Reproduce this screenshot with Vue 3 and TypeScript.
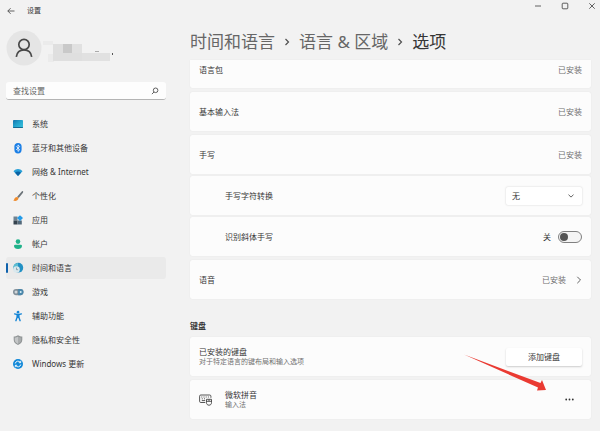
<script setup lang="ts">
import { ref } from 'vue'

interface NavItem {
  id: string
  label: string
}

const navItems: NavItem[] = [
  { id: 'system', label: '系统' },
  { id: 'bluetooth', label: '蓝牙和其他设备' },
  { id: 'network', label: '网络 & Internet' },
  { id: 'personal', label: '个性化' },
  { id: 'apps', label: '应用' },
  { id: 'accounts', label: '帐户' },
  { id: 'time', label: '时间和语言' },
  { id: 'gaming', label: '游戏' },
  { id: 'access', label: '辅助功能' },
  { id: 'privacy', label: '隐私和安全性' },
  { id: 'update', label: 'Windows 更新' },
]

const active = ref('time')
const query = ref('')
const conversion = ref('无')
const slanted = ref(false)
</script>

<template>
  <div class="window">
    <header class="titlebar">
      <button class="plain" type="button" aria-label="返回">
        <svg width="8" height="8" viewBox="0 0 8 8" class="line"><path d="M7.5 4H.8M3.6 1.2.8 4l2.8 2.8" /></svg>
      </button>
      <span class="app-name">设置</span>
      <div class="caption">
        <button class="plain" type="button" aria-label="最小化">
          <svg width="8" height="8" viewBox="0 0 8 8" class="line"><path d="M1 4h6" /></svg>
        </button>
        <button class="plain" type="button" aria-label="最大化">
          <svg width="8" height="8" viewBox="0 0 8 8" class="line"><rect x="1.2" y="1.2" width="5.6" height="5.6" rx=".8" /></svg>
        </button>
        <button class="plain" type="button" aria-label="关闭">
          <svg width="8" height="8" viewBox="0 0 8 8" class="line"><path d="m1.3 1.3 5.4 5.4m0-5.4L1.3 6.7" /></svg>
        </button>
      </div>
    </header>

    <div class="body">
      <aside class="sidebar">
        <div class="profile">
          <svg width="36" height="36" viewBox="0 0 36 36">
            <circle cx="18" cy="18" r="17.5" fill="#e5e5e5" />
            <g fill="none" stroke="#484848" stroke-width="1.7">
              <circle cx="18" cy="14.5" r="5.2" />
              <path d="M10.3 26.8c.6-4.3 3.6-7 7.7-7s7.1 2.7 7.7 7" />
            </g>
          </svg>
          <svg class="name-mask" width="74" height="26" viewBox="0 0 74 26">
            <g class="mosaic">
              <path fill="#ebebeb" d="M0 3h10v4H0zM5 16h6v8H5z" />
              <path fill="#dfdfdf" d="M10 6h10v9H10zM10 15h29v8H10z" />
              <path fill="#c9c9c9" d="M20 6h9v9h-9z" />
              <path fill="#e1e1e1" d="M29 6h10v9H29zM39 15h28v8H39z" />
            </g>
            <path fill="#aaa" d="M52 13h4v1h-4z" />
            <path fill="#555" d="M69 15h1v2h-1z" />
          </svg>
        </div>

        <label class="search">
          <input v-model="query" type="text" placeholder="查找设置" aria-label="查找设置" />
          <svg width="8" height="8" viewBox="0 0 8 8" class="line"><circle cx="4.6" cy="3.3" r="2.3" /><path d="M3 5 .9 7.1" /></svg>
        </label>

        <nav class="nav">
          <a
            v-for="item in navItems"
            :key="item.id"
            href="#"
            :class="['nav-item', { active: active === item.id }]"
            @click.prevent="active = item.id"
          >
            <svg width="12" height="12" viewBox="0 0 12 12">
              <g v-if="item.id === 'system'">
                <defs>
                  <linearGradient id="screen" x1="0" y1="0" x2="1" y2="1">
                    <stop offset="0" stop-color="#1573ac" />
                    <stop offset=".45" stop-color="#22a2cc" />
                    <stop offset="1" stop-color="#3cc4dc" />
                  </linearGradient>
                </defs>
                <rect x="1" y="2" width="10" height="8" rx=".8" fill="url(#screen)" />
                <path d="M1 9h10v.2a.8.8 0 0 1-.8.8H1.8a.8.8 0 0 1-.8-.8z" fill="#136a92" />
              </g>
              <g v-else-if="item.id === 'bluetooth'">
                <rect x="2.4" y="1" width="7.2" height="10.4" rx="3.6" fill="#1b7fe6" />
                <path d="m4.2 4.3 3.5 3.5L6 9.4V2.9l1.7 1.6L4.2 8" fill="none" stroke="#fff" stroke-width=".8" />
              </g>
              <g v-else-if="item.id === 'network'">
                <path d="M1.5 5.2C4 2.2 8 2.2 10.5 5.2L6 10z" fill="#27a0d8" />
                <path d="M3 6.8c1.6-1.6 4.400-1.600 6 0L6 10z" fill="#0c62a2" />
              </g>
              <g v-else-if="item.id === 'personal'">
                <path d="M10.8 1c.7.4.4 1.3 0 1.9L6.7 8 5.2 6.8 9.5 1.7c.4-.5.900-.9 1.300-.7z" fill="#6d7479" />
                <path d="M5 6.9c1 0 1.7.9 1.4 1.9C6 10.6 3.5 11.5 1.2 10.500c1.400-.6 1-3.500 3.800-3.600z" fill="#ef8b2c" />
              </g>
              <g v-else-if="item.id === 'apps'">
                <path d="M1.5 2.5h4v4h-4z" fill="#6f8291" />
                <path d="M1.5 6.5h4v4h-4z" fill="#35434e" />
                <path d="M5.5 6.5h4.3v4H5.5z" fill="#53697a" />
                <path d="m8 1.200 3 2.900-3 3-3-3z" fill="#239be8" />
              </g>
              <g v-else-if="item.id === 'accounts'" fill="#20b28a">
                <circle cx="6" cy="3.6" r="2.3" />
                <path d="M2 8a1.2 1.2 0 0 1 1.2-1.2h5.6A1.2 1.2 0 0 1 10 8c0 2-1.7 3-4 3S2 10 2 8z" />
              </g>
              <g v-else-if="item.id === 'time'">
                <circle cx="6.3" cy="5.7" r="4.9" fill="#2391c4" />
                <path d="M6 .9a4.900 4.900 0 0 0-4.600 6.300L6 6z" fill="#5cbdd0" />
                <circle cx="4.5" cy="7.5" r="3.3" fill="#d9e8ed" />
                <path d="M4.5 5.6v2.100h1.600" fill="none" stroke="#6b8896" stroke-width=".7" />
              </g>
              <g v-else-if="item.id === 'gaming'">
                <rect x="1" y="3" width="10.5" height="6.2" rx="3.1" fill="#82909a" />
                <path d="M6.2 3h2.200a3.100 3.100 0 0 1 0 6.200H6.200z" fill="#4b88ac" />
                <path d="M2.500 6h3M4 4.600v3" stroke="#fff" stroke-width=".8" />
                <circle cx="8.7" cy="6.1" r="1" fill="#d9eff7" />
              </g>
              <g v-else-if="item.id === 'access'" fill="none" stroke="#1686d6" stroke-width="1.4" stroke-linecap="round" stroke-linejoin="round">
                <circle cx="6" cy="2.2" r=".7" />
                <path d="M2.600 3.900 6 4.700l3.400-.8M5.100 5v2.300l-1.200 3.400M6.900 5v2.300l1.200 3.400M6 5v2.300" />
              </g>
              <g v-else-if="item.id === 'privacy'">
                <path d="M6 1.200c1.400 1 2.700 1.200 4.300 1.200v3.400c0 2.500-1.800 4.200-4.300 5.200-2.500-1-4.300-2.700-4.300-5.200V2.400c1.600 0 2.900-.2 4.300-1.200z" fill="#8f9394" />
                <path d="M6 2.400c-1.100.7-2 .9-3.300 1v2.400c0 2 1.300 3.200 3.300 4.100z" fill="#c4c6c7" />
                <path d="M6 2.400c1.100.7 2 .9 3.300 1v2.400c0 2-1.300 3.200-3.300 4.100z" fill="#a9acad" />
              </g>
              <g v-else>
                <circle cx="6" cy="6" r="5" fill="#1188d8" />
                <path d="M3.200 5.500a2.900 2.900 0 0 1 5.300-1M8.800 6.500a2.900 2.900 0 0 1-5.300 1M8.700 2.800v1.900H6.800M3.300 9.200V7.300h1.900" fill="none" stroke="#fff" stroke-width=".9" />
              </g>
            </svg>
            <span>{{ item.label }}</span>
          </a>
        </nav>
      </aside>

      <main class="content">
        <h1 class="crumbs">
          <a href="#">时间和语言</a>
          <svg width="6" height="8" viewBox="0 0 6 8" class="line crumb-sep"><path d="m1.5 1 3 3-3 3" /></svg>
          <a href="#">语言 &amp; 区域</a>
          <svg width="6" height="8" viewBox="0 0 6 8" class="line crumb-sep"><path d="m1.5 1 3 3-3 3" /></svg>
          <span>选项</span>
        </h1>

        <section class="cards">
          <div class="card first">
            <span>语言包</span>
            <span class="status">已安装</span>
          </div>
          <div class="card">
            <span>基本输入法</span>
            <span class="status">已安装</span>
          </div>
          <div class="group">
            <div class="card">
              <span>手写</span>
              <span class="status">已安装</span>
            </div>
            <div class="card nested">
              <label for="conversion">手写字符转换</label>
              <div class="select">
                <select id="conversion" v-model="conversion">
                  <option>无</option>
                </select>
                <svg width="6" height="4" viewBox="0 0 6 4" class="line"><path d="m.5.7 2.500 2.400L5.500.7" /></svg>
              </div>
            </div>
            <div class="card nested">
              <label for="slanted">识别斜体手写</label>
              <div class="toggle">
                <span>{{ slanted ? '开' : '关' }}</span>
                <input id="slanted" v-model="slanted" type="checkbox" role="switch" />
              </div>
            </div>
          </div>
          <a class="card" href="#">
            <span>语音</span>
            <span class="status more">
              已安装
              <svg width="6" height="8" viewBox="0 0 6 8" class="line"><path d="m1.300.8 3.200 3.200-3.200 3.200" /></svg>
            </span>
          </a>
        </section>

        <h2 class="heading">键盘</h2>

        <section class="cards">
          <div class="card">
            <div class="stack">
              <span>已安装的键盘</span>
              <small>对于特定语言的键布局和输入选项</small>
            </div>
            <button class="add" type="button">添加键盘</button>
          </div>
          <div class="card">
            <svg class="keyboard" width="13" height="13" viewBox="0 0 13 13" fill="none" stroke="#444" stroke-width=".9">
              <path d="M6.300 9.500H1.800A1.200 1.200 0 0 1 .6 8.300V3.200A1.200 1.200 0 0 1 1.800 2h8.900a1.200 1.200 0 0 1 1.200 1.200v1.600" />
              <path d="M2.300 4h1m1.200 0h1m1.200 0h1m1.200 0h1M2.800 5.800h1m1.200 0h1M2.800 7.600h3.400" />
              <path d="M7.500 6.300h5v3.400c0 1.500-1 2.500-2.500 2.500s-2.500-1-2.500-2.500zM7.500 8.300h5M10 6.300v2" />
            </svg>
            <div class="stack">
              <span>微软拼音</span>
              <small>输入法</small>
            </div>
            <button class="plain dots" type="button" aria-label="更多选项">
              <svg width="9" height="3" viewBox="0 0 9 3" fill="#333"><circle cx="1.2" cy="1.5" r=".9" /><circle cx="4.5" cy="1.5" r=".9" /><circle cx="7.8" cy="1.5" r=".9" /></svg>
            </button>
            <svg class="pointer" width="84" height="38" viewBox="0 0 84 38" aria-hidden="true">
              <path d="M1 .6 77.500 29 79 26 83 36 74 36.500 75 33.500z" fill="#ea3a32" />
            </svg>
          </div>
        </section>
      </main>
    </div>
  </div>
</template>

<style>
body {
  margin: 0;
  background: #f2f2f2;
}
</style>

<style scoped>
.window {
  min-height: 100vh;
  box-sizing: border-box;
  background: #f2f2f2;
  color: #363636;
  font: 8px/10px "Noto Sans", "Noto Sans CJK SC", sans-serif;
}

a {
  color: inherit;
  text-decoration: none;
}

button,
input,
select {
  font: inherit;
  color: inherit;
}

.plain {
  display: flex;
  padding: 0;
  border: 0;
  background: none;
}

.line {
  fill: none;
  stroke: #505050;
  stroke-width: 0.9;
}

.titlebar {
  display: flex;
  align-items: center;
  padding: 2px 4px 0 7px;
  height: 20px;
  box-sizing: border-box;
}

.app-name {
  margin-left: 12px;
  font-size: 7px;
}

.caption {
  display: flex;
  gap: 19px;
  margin-left: auto;
  align-self: flex-start;
}

.body {
  display: flex;
}

.sidebar {
  flex: none;
  width: 160px;
  padding: 10px 0 0 6px;
}

.profile {
  display: flex;
  gap: 1px;
}

.name-mask {
  margin-top: 8px;
}

.mosaic {
  filter: blur(0.7px);
}

.search {
  display: flex;
  align-items: center;
  margin-top: 16px;
  padding: 0 7px;
  height: 18px;
  box-sizing: border-box;
  border-bottom: 1px solid #b4b4b4;
  border-radius: 3px;
  background: #fdfdfd;
}

.search input {
  flex: 1;
  min-width: 0;
  padding: 0;
  border: 0;
  outline: 0;
  background: none;
}

.search input::placeholder {
  color: #666;
}

.nav {
  display: flex;
  flex-direction: column;
  gap: 2px;
  margin-top: 13px;
}

.nav-item {
  position: relative;
  display: flex;
  align-items: center;
  gap: 8px;
  height: 22px;
  padding-left: 6px;
  border-radius: 3px;
}

.nav-item.active {
  background: #eaeaea;
}

.nav-item.active::before {
  content: "";
  position: absolute;
  left: 0;
  top: 6px;
  width: 2px;
  height: 10px;
  border-radius: 1px;
  background: #0f62ac;
}

.content {
  flex: 1;
  min-width: 0;
  padding: 10px 9px 12px 24px;
}

.crumbs {
  display: flex;
  align-items: center;
  margin: 0 0 6px;
  height: 24px;
  font-size: 17px;
  line-height: 24px;
  font-weight: 400;
}

.crumbs a {
  color: #666;
}

.crumb-sep {
  margin: 0 9px;
  stroke-width: 1.2;
}

.cards {
  display: flex;
  flex-direction: column;
  gap: 4px;
}

.group {
  display: flex;
  flex-direction: column;
  gap: 2px;
}

.card {
  position: relative;
  display: flex;
  align-items: center;
  justify-content: space-between;
  min-height: 39px;
  box-sizing: border-box;
  padding: 0 9px;
  border-radius: 2px;
  background: #fcfcfc;
  box-shadow: 0 0 1px #d8d8d8;
}

.card.first {
  min-height: 28px;
  padding-bottom: 8px;
  border-radius: 0 0 2px 2px;
}

.card.nested {
  padding-left: 35px;
}

.status {
  color: #707070;
}

.more {
  display: flex;
  align-items: center;
  gap: 10px;
}

.select {
  position: relative;
  display: flex;
  align-items: center;
}

.select select {
  appearance: none;
  width: 76px;
  height: 18px;
  padding: 0 6px;
  border: 0;
  border-radius: 2px;
  background: #fff;
  box-shadow: 0 0 2px #ccc;
}

.select svg {
  position: absolute;
  right: 8px;
  pointer-events: none;
}

.toggle {
  display: flex;
  align-items: center;
  gap: 7px;
}

.toggle input {
  appearance: none;
  display: flex;
  align-items: center;
  width: 24px;
  height: 12px;
  box-sizing: border-box;
  margin: 0;
  padding: 0 1px;
  border: 1px solid #808080;
  border-radius: 6px;
  background: #f4f4f4;
}

.toggle input::before {
  content: "";
  width: 8px;
  height: 8px;
  border-radius: 50%;
  background: #555;
}

.toggle input:checked {
  justify-content: flex-end;
}

.heading {
  margin: 21px 0 6px;
  font-size: 8px;
  line-height: 11px;
  font-weight: 700;
}

.stack {
  display: flex;
  flex-direction: column;
}

.stack small {
  font-size: 7px;
  color: #707070;
}

.add {
  width: 76px;
  height: 18px;
  padding: 0;
  border: 0;
  border-radius: 2px;
  background: #fff;
  box-shadow: 0 1px 2px #ccc;
}

.keyboard {
  margin-right: 13px;
}

.dots {
  margin-left: auto;
  padding: 6px 8px;
}

.pointer {
  position: absolute;
  right: 44px;
  bottom: 27px;
  pointer-events: none;
}
</style>
